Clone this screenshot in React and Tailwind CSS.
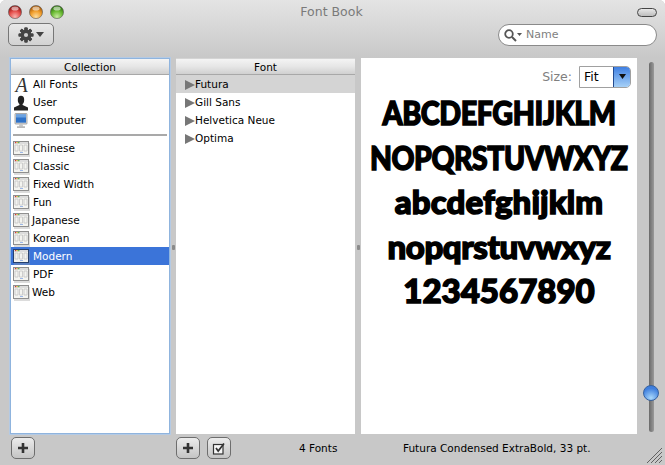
const font = { fontFamily: '"DejaVu Sans", sans-serif' };

function Lights() {
  const c = [
    ["#e6504d", "#8e1512", "#f7b3ae"],
    ["#f2a02e", "#a85a08", "#fbdc9e"],
    ["#6cbc35", "#2f7510", "#c6eaa0"],
  ];
  return (
    <div className="flex gap-[7px]">
      {c.map((x, i) => (
        <svg key={i} width="14" height="14" viewBox="0 0 14 14">
          <defs>
            <radialGradient id={"l" + i} cx="50%" cy="85%" r="75%">
              <stop offset="0" stopColor={x[2]} />
              <stop offset="0.55" stopColor={x[0]} />
              <stop offset="1" stopColor={x[1]} />
            </radialGradient>
          </defs>
          <circle cx="7" cy="7" r="6.6" fill={"url(#l" + i + ")"} stroke="#5f5f5f" strokeWidth="0.6" />
          <ellipse cx="7" cy="3.4" rx="3.6" ry="2" fill="#fff" opacity="0.55" />
        </svg>
      ))}
    </div>
  );
}

function Gear() {
  const teeth = [0, 45, 90, 135, 180, 225, 270, 315];
  return (
    <svg width="16" height="16" viewBox="0 0 16 16">
      {teeth.map((a) => (
        <rect key={a} x="6.4" y="0.6" width="3.2" height="14.8" rx="0.6" fill="#444" transform={`rotate(${a} 8 8)`} />
      ))}
      <circle cx="8" cy="8" r="5.4" fill="#444" />
      <circle cx="8" cy="8" r="2.1" fill="#cfcfcf" />
    </svg>
  );
}

function DocIcon({ selected }) {
  return (
    <svg width="17" height="16" viewBox="0 0 17 16" className="shrink-0">
      <rect x="1" y="2" width="16" height="14" fill="#9a9a9a" opacity="0.35" />
      <rect x="0.5" y="0.5" width="15" height="13" fill="#f4f4f0" stroke={selected ? "#27406c" : "#8f8f8f"} />
      <rect x="1" y="1" width="14" height="2" fill="#dcdcdc" />
      <rect x="2" y="1" width="1.2" height="1.2" fill="#d33" />
      <rect x="3.6" y="1" width="1.2" height="1.2" fill="#db3" />
      <rect x="5.2" y="1" width="1.2" height="1.2" fill="#4a4" />
      <path d="M2 4h3v6H2zM6.5 4h3v6h-3zM11 4h3v6h-3z" fill="none" stroke="#c4c4c4" strokeWidth="0.8" />
      <rect x="7" y="11" width="3" height="1" fill="#9db8e8" />
    </svg>
  );
}

function UserIcon() {
  return (
    <svg width="16" height="16" viewBox="0 0 16 16" className="shrink-0">
      <ellipse cx="8" cy="5" rx="3.2" ry="4.2" fill="#222" />
      <path d="M6.4 8.2h3.2v1.8l5.4 2.4v3H1v-3l5.4-2.4z" fill="#222" />
    </svg>
  );
}

function ComputerIcon() {
  return (
    <svg width="16" height="16" viewBox="0 0 16 16" className="shrink-0">
      <rect x="2" y="0.5" width="12" height="10.5" rx="0.6" fill="#dcdcdc" stroke="#8a8a8a" strokeWidth="0.7" />
      <rect x="3" y="1.5" width="10" height="8.2" fill="#2f72c8" />
      <rect x="3" y="1.5" width="10" height="3" fill="#6aa2e2" />
      <path d="M6.5 11h3l.6 2.4H5.9z" fill="#c8c8c8" />
      <rect x="4" y="13.4" width="8" height="1.4" fill="#a8a8a8" />
    </svg>
  );
}

function FontIcon() {
  return (
    <span
      className="w-[17px] h-[16px] shrink-0 flex items-center justify-center text-[20px] italic leading-none text-[#333]"
      style={{ fontFamily: '"Liberation Serif", serif' }}
    >
      A
    </span>
  );
}

function Row({ icon, label, selected }) {
  return (
    <div className={`h-[18px] flex items-center pl-[2px] pt-[1px] text-[10.5px] ${selected ? "bg-[#3b74d9] text-white" : "text-black"}`}>
      <span className="w-[20px] flex shrink-0">{icon}</span>
      <span className={label === "Japanese" || label === "Web" ? "ml-[-1px]" : ""}>{label}</span>
    </div>
  );
}

function Header({ children }) {
  return (
    <div className="h-[16px] shrink-0 border-b border-[#a8a8a8] bg-gradient-to-b from-[#f4f4f4] via-[#e6e6e6] to-[#d0d0d0] flex items-center justify-center pt-[3px] text-[10.5px] text-black">
      {children}
    </div>
  );
}

function FontRow({ label, selected }) {
  return (
    <div className={`h-[18px] flex items-center pl-[9px] pt-[1px] text-[10.5px] text-black ${selected ? "bg-[#d4d4d4]" : ""}`}>
      <svg width="10" height="10" viewBox="0 0 10 10" className="shrink-0 mt-[1px]">
        <path d="M0 0l10 5-10 5z" fill="#777" />
      </svg>
      <span>{label}</span>
    </div>
  );
}

function PlusButton() {
  return (
    <button className="w-[24px] h-[22px] rounded-[5px] border border-[#6e6e6e] bg-gradient-to-b from-[#ececec] to-[#c4c4c4] flex items-center justify-center">
      <svg width="12" height="12" viewBox="0 0 12 12">
        <path d="M4.7 1h2.6v3.7H11v2.6H7.3V11H4.7V7.3H1V4.7h3.7z" fill="#333" />
      </svg>
    </button>
  );
}

function CheckButton() {
  return (
    <button className="w-[24px] h-[22px] rounded-[5px] border border-[#6e6e6e] bg-gradient-to-b from-[#ececec] to-[#c4c4c4] flex items-center justify-center">
      <svg width="14" height="13" viewBox="0 0 14 13">
        <rect x="1.5" y="2.5" width="9.5" height="9.5" fill="#f6f6f6" stroke="#333" strokeWidth="1.2" />
        <path d="M4 6l2.2 3L12 1.5" fill="none" stroke="#333" strokeWidth="1.7" />
      </svg>
    </button>
  );
}

function Divider() {
  return (
    <div className="w-[6px] flex items-center justify-center">
      <div className="w-[3px] h-[5px] bg-[#8a8a8a] rounded-[1px] mt-[2px]" />
    </div>
  );
}

export default function App() {
  return (
    <div className="w-[665px] h-[465px] overflow-hidden flex flex-col bg-[#c8c8c8] rounded-t-[6px]" style={font}>
      <div className="h-[58px] shrink-0 bg-gradient-to-b from-[#e4e4e4] to-[#c8c8c8] flex flex-col">
        <div className="h-[23px] flex items-center pl-[8px] pr-[8px] pt-[1px] relative">
          <Lights />
          <div className="flex-1 text-center text-[12.5px] text-[#7a7a7a] pr-[38px] pt-[1px]">Font Book</div>
          <div className="w-[20px] h-[9px] rounded-full border border-[#444] bg-gradient-to-b from-[#e8e8e8] to-[#bdbdbd]" />
        </div>
        <div className="flex items-center justify-between pl-[8px] pr-[8px]">
          <button className="w-[46px] h-[23px] rounded-[5px] border border-[#777] bg-gradient-to-b from-[#e8e8e8] to-[#d2d2d2] flex items-center justify-center gap-[2px]">
            <Gear />
            <svg width="8" height="5" viewBox="0 0 8 5"><path d="M0 0h8L4 5z" fill="#444" /></svg>
          </button>
          <div className="w-[159px] h-[22px] rounded-full border border-[#8a8a8a] bg-white flex items-center pl-[4px] text-[11px] text-[#7f7f7f] mt-[1px]">
            <svg width="20" height="14" viewBox="0 0 20 14" className="shrink-0">
              <circle cx="6" cy="6" r="3.8" fill="none" stroke="#555" strokeWidth="1.8" />
              <path d="M9 9l4 4" stroke="#555" strokeWidth="2" />
              <path d="M14 5h5l-2.5 3z" fill="#555" />
            </svg>
            <span className="ml-[3px] pt-[1px]">Name</span>
          </div>
        </div>
      </div>

      <div className="flex-1 flex items-stretch pl-[10px] min-h-0">
        <div className="w-[160px] flex flex-col bg-white border border-[#8fb4de] shadow-[0_0_0_1px_#b4cae4]">
          <Header>Collection</Header>
          <div className="flex-1">
            <Row icon={<FontIcon />} label="All Fonts" />
            <Row icon={<UserIcon />} label="User" />
            <Row icon={<ComputerIcon />} label="Computer" />
            <div className="h-[10px] pt-[5px] px-[2px]">
              <div className="w-full h-[2px] bg-[#a9a9a9]" />
            </div>
            {["Chinese", "Classic", "Fixed Width", "Fun", "Japanese", "Korean", "Modern", "PDF", "Web"].map((l) => (
              <Row key={l} icon={<DocIcon selected={l === "Modern"} />} label={l} selected={l === "Modern"} />
            ))}
          </div>
        </div>
        <Divider />
        <div className="w-[179px] flex flex-col bg-white border-t border-[#d4d4d4]">
          <Header>Font</Header>
          <div>
            <FontRow label="Futura" selected />
            <FontRow label="Gill Sans" />
            <FontRow label="Helvetica Neue" />
            <FontRow label="Optima" />
          </div>
        </div>
        <Divider />
        <div className="w-[276px] flex flex-col bg-white relative">
          <div className="h-[30px] flex items-center justify-end pr-[6px] pt-[7px] gap-[7px] text-[12.5px] text-[#7f7f7f]">
            <span className="pt-[1px]">Size:</span>
            <div className="w-[52px] h-[22px] flex border border-[#a0a0a0] rounded-r-[5px] overflow-hidden text-black">
              <span className="flex-1 flex items-center pl-[4px] pt-[1px]">Fit</span>
              <span className="w-[17px] flex items-center justify-center bg-gradient-to-b from-[#3f7fe2] to-[#a6d0f6] border-l border-[#224a90]">
                <svg width="7" height="5" viewBox="0 0 7 5"><path d="M0 0h7L3.5 5z" fill="#111" /></svg>
              </span>
            </div>
          </div>
          <div
            className="flex flex-col items-center text-black font-black text-[33px] leading-[44.5px] pt-[2px] [-webkit-text-stroke:1.5px_black]"
            style={{ fontFamily: "Lato, sans-serif" }}
          >
            <div className="whitespace-nowrap scale-x-[0.87] tracking-[-0.5px]">ABCDEFGHIJKLM</div>
            <div className="whitespace-nowrap scale-x-[0.86] tracking-[-0.5px]">NOPQRSTUVWXYZ</div>
            <div className="whitespace-nowrap tracking-[0.1px]">abcdefghijklm</div>
            <div className="whitespace-nowrap tracking-[-0.4px]">nopqrstuvwxyz</div>
            <div className="whitespace-nowrap tracking-[0px]">1234567890</div>
          </div>
        </div>
        <div className="flex-1 flex flex-col items-center pt-[4px] pb-[2px] relative">
          <div className="w-[5px] flex-1 rounded-full bg-gradient-to-r from-[#6a6a6a] to-[#9a9a9a]" />
          <div className="absolute left-[6px] top-[327px] w-[16px] h-[16px] rounded-full border border-[#36619f] bg-[radial-gradient(circle_at_50%_85%,#a9d8fb,#3f7fde_70%)]" />
        </div>
      </div>

      <div className="h-[31px] shrink-0 flex items-center pl-[11px] pb-[3px] text-[10.5px] text-black relative">
        <div className="flex w-[165px]"><PlusButton /></div>
        <div className="flex gap-[7px] w-[123px]"><PlusButton /><CheckButton /></div>
        <div className="w-[104px] pt-[2px]">4 Fonts</div>
        <div className="pt-[2px]">Futura Condensed ExtraBold, 33 pt.</div>
        <svg width="16" height="16" viewBox="0 0 16 16" className="absolute right-[3px] bottom-[2px]">
          <path d="M16 1L1 16M16 5L5 16M16 9L9 16M16 13L13 16" stroke="#555" strokeWidth="0.9" fill="none" />
        </svg>
      </div>
    </div>
  );
}
